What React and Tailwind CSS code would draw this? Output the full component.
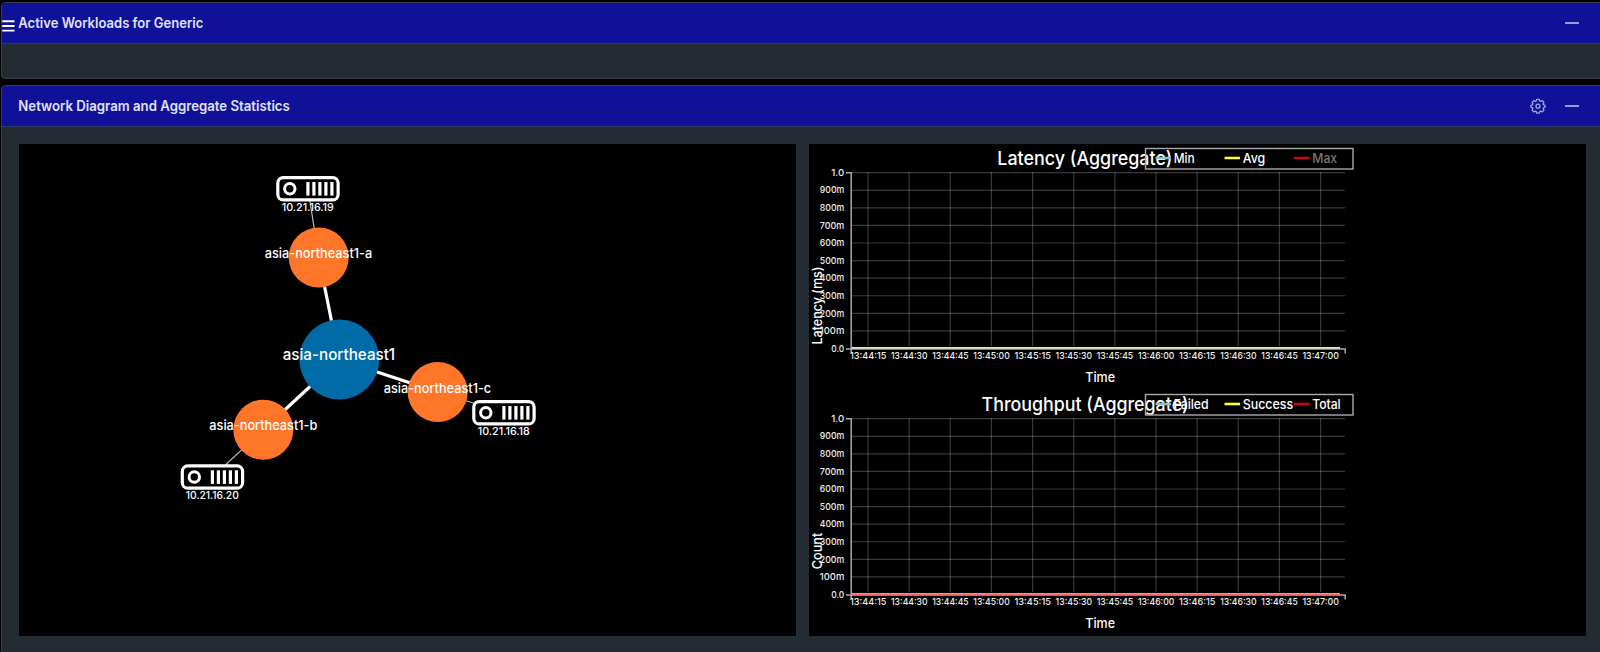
import React from "react";

const times = ["13:44:15", "13:44:30", "13:44:45", "13:45:00", "13:45:15", "13:45:30", "13:45:45", "13:46:00", "13:46:15", "13:46:30", "13:46:45", "13:47:00"];
const levels = ["1.0", "900m", "800m", "700m", "600m", "500m", "400m", "300m", "200m", "100m", "0.0"];

function Label({ x, y, w, children, ...rest }) {
  return (
    <text x={x} y={y} textLength={w} lengthAdjust="spacingAndGlyphs" fill="#fff" {...rest}>
      {children}
    </text>
  );
}

function Minus() {
  return <span className="block h-[2px] w-[14px] bg-[#9a9bd6]" />;
}

function Gear() {
  return (
    <svg width="16" height="16" viewBox="0 0 16 16" fill="none" stroke="#a3a4dc" strokeWidth="1.3" strokeLinejoin="round">
      <path d="M6.7 1.400h2.600l.5 1.700.8.300 1.600-.8 1.700 1.800-.8 1.500.4.900 1.600.5v1.900l-1.600.6-.4.800.8 1.600-1.700 1.700-1.600-.8-.8.400-.5 1.600H6.700l-.5-1.600-.9-.4-1.500.8-1.700-1.700.8-1.600-.4-.8L.9 9.200V7.300l1.600-.5.4-.9-.8-1.500 1.700-1.800 1.500.8.9-.3z" />
      <circle cx="8" cy="8.200" r="2" />
    </svg>
  );
}

function Header({ title, width, gear }) {
  return (
    <div className="flex h-[41px] items-center border-b border-[#2c3a66] bg-[#0f1299] pl-[16px] pr-[25px]">
      <h2 className="grow text-[14px] font-semibold leading-5">
        <svg className="block h-5 w-[400px] overflow-visible">
          <Label x="0.300" y="15.300" w={width} fill="#e0e0f7">{title}</Label>
        </svg>
      </h2>
      <div className="flex items-center gap-[19px]">
        {gear && <Gear />}
        <Minus />
      </div>
    </div>
  );
}

function Server({ x, y, ip, w }) {
  return (
    <g transform={`translate(${x} ${y})`}>
      <rect x="1.300" y="1.400" width="60.300" height="22.300" rx="5.500" fill="#000" stroke="#fff" strokeWidth="3.200" />
      <circle cx="13.300" cy="12.500" r="5.200" fill="none" stroke="#fff" strokeWidth="3" />
      {[0, 1, 2, 3, 4].map((i) => (
        <rect key={i} x={29.8 + i * 6} y="5.800" width="3.200" height="13.600" fill="#fff" />
      ))}
      <Label x={31.3 - w / 2} y="34.800" w={w} fontSize="10.800" fontWeight="500">{ip}</Label>
    </g>
  );
}

function Diagram() {
  return (
    <svg className="block h-[492px] w-[777px] bg-black" viewBox="19 144 777 492">
      <g stroke="#fff" strokeWidth="3.200">
        <line x1="339.300" y1="359.500" x2="318.700" y2="257.500" />
        <line x1="339.300" y1="359.500" x2="263.300" y2="429.700" />
        <line x1="339.300" y1="359.500" x2="437.700" y2="392" />
      </g>
      <g stroke="#bbb" strokeWidth="1.200">
        <line x1="318.700" y1="257.500" x2="308" y2="188.500" />
        <line x1="263.300" y1="429.700" x2="212.500" y2="477" />
        <line x1="437.700" y1="392" x2="504" y2="412.500" />
      </g>
      <circle cx="339.300" cy="359.500" r="40" fill="#006ba6" />
      <circle cx="318.700" cy="257.500" r="30" fill="#ff7629" />
      <circle cx="263.300" cy="429.700" r="30" fill="#ff7629" />
      <circle cx="437.700" cy="392" r="30" fill="#ff7629" />
      <Server x={276.5} y={176.2} ip="10.21.16.19" w={52} />
      <Server x={472.5} y={400.2} ip="10.21.16.18" w={52} />
      <Server x={181} y={464.5} ip="10.21.16.20" w={53} />
      <g fontWeight="500">
        <Label x="282.700" y="360" w="112.500" fontSize="16">asia-northeast1</Label>
        <Label x="264.700" y="258" w="107.500" fontSize="13.300">asia-northeast1-a</Label>
        <Label x="209.300" y="430" w="108" fontSize="13.300">asia-northeast1-b</Label>
        <Label x="383.700" y="393" w="107.500" fontSize="13.300">asia-northeast1-c</Label>
      </g>
    </svg>
  );
}

function Chart({ title, titleX, titleW, unit, unitY, unitW, legend, line, edge }) {
  return (
    <svg className="block h-[246px] w-[777px]" viewBox="809 144 777 246">
      <g stroke="#fff" strokeOpacity="0.220" strokeWidth="1.200">
        {levels.slice(0, 10).map((l, i) => (
          <line key={l} x1="852" x2="1345" y1={172.7 + i * 17.58} y2={172.7 + i * 17.58} />
        ))}
        {times.map((t, i) => (
          <line key={t} x1={868 + i * 41.14} x2={868 + i * 41.14} y1="172" y2="346" />
        ))}
      </g>
      <path d="M846 172.700H851.200V349M846 349H1345.200V353.500M851.200 349V353" fill="none" stroke="#aaa" strokeWidth="1.500" />
      <line x1="851.500" x2="1340" y1="347.500" y2="347.500" stroke={edge} strokeWidth="1" />
      <line x1="851.500" x2="1340" y1="348.500" y2="348.500" stroke={line} strokeWidth="1" />
      <g fontSize="10" fontWeight="500" className="font-[Inter]">
        {levels.map((l, i) => {
          const w = l.length === 3 ? 13 : 24.5;
          return <Label key={l} x={844.3 - w} y={175.9 + i * 17.58} w={w} fill="#eee" fontSize="9.500">{l}</Label>;
        })}
        {times.map((t, i) => (
          <Label key={t} x={849.9 + i * 41.14} y="359" w="36.500" fill="#eee" fontSize="9.500">{t}</Label>
        ))}
      </g>
      <Label x="1085.300" y="381.800" w="29.700" fontSize="13.300" fontWeight="500">Time</Label>
      <g transform={`translate(822.300 ${unitY}) rotate(-90)`}>
        <Label x="0" y="0" w={unitW} fontSize="13.300" fontWeight="500">{unit}</Label>
      </g>
      <Label x={titleX} y="164.600" w={titleW} fontSize="19" fontWeight="500">{title}</Label>
      <rect x="1145.500" y="148.500" width="207.500" height="20.500" fill="none" stroke="#aaa" strokeWidth="1.400" />
      {legend.map(([name, x, w, color, dim]) => (
        <g key={name}>
          <line x1={x - 18.5} x2={x - 3} y1="158" y2="158" stroke={color} strokeWidth="2.600" />
          <Label x={x - 0.3} y="163" w={w} fontSize="13.300" fontWeight="500" fill={dim ? "#777" : "#fff"}>{name}</Label>
        </g>
      ))}
    </svg>
  );
}

export default function App() {
  return (
    <div className="flex h-[652px] w-[1600px] flex-col gap-[6px] overflow-hidden bg-black pl-px pt-[2px] font-[Inter,sans-serif] text-white">
      <section className="h-[77px] w-[1604px] shrink-0 overflow-hidden rounded border border-[#34404a] bg-[#242b33]">
        <div className="relative">
          <Header title="Active Workloads for Generic" width={185} />
          <svg className="absolute left-0 top-[17px] h-[12px] w-[13px]" stroke="#fff" strokeWidth="1.900">
            <path d="M.3 1.300H12.500M.3 6H12.500M.3 10.600H12.500" />
          </svg>
        </div>
      </section>
      <section className="h-[600px] w-[1604px] shrink-0 overflow-hidden rounded border border-[#34404a] bg-[#242b33]">
        <Header title="Network Diagram and Aggregate Statistics" width={271.5} gear />
        <div className="flex gap-[13px] pl-[17px] pt-[17px]">
          <Diagram />
          <div className="flex w-[777px] flex-col bg-black">
            <Chart
              title="Latency (Aggregate)" titleX={997.3} titleW={175}
              unit="Latency (ms)" unitY={344.5} unitW={78}
              line="#c9d8a0" edge="#eaf56a"
              legend={[["Min", 1174, 21, "#8fbccb"], ["Avg", 1243, 22.5, "#ffff33"], ["Max", 1312.5, 25, "#d0021b", true]]}
            />
            <Chart
              title="Throughput (Aggregate)" titleX={981.5} titleW={207}
              unit="Count" unitY={323.3} unitW={36.5}
              line="#ff6a68" edge="#ff8f66"
              legend={[["Failed", 1174, 35, "#8fbccb"], ["Success", 1243, 50.5, "#ffff33"], ["Total", 1312.5, 28.5, "#d0021b"]]}
            />
          </div>
        </div>
      </section>
    </div>
  );
}
